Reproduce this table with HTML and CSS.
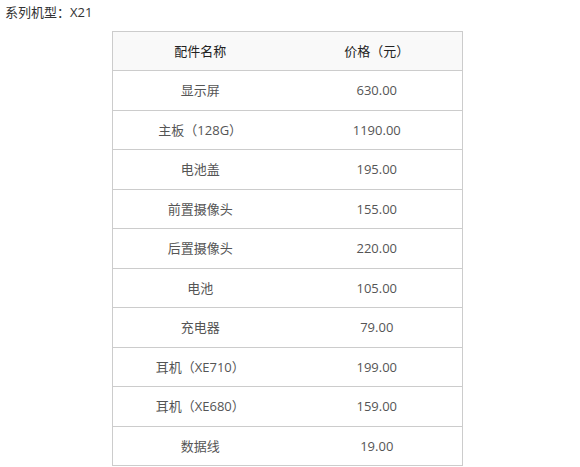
FILE: index.html
```html
<!DOCTYPE html>
<html lang="zh-CN">
<head>
<meta charset="utf-8">
<title>X21 配件价格</title>
<link rel="stylesheet" href="styles.css">
</head>
<body>
<p class="title">系列机型：X21</p>
<table class="price-table">
  <thead>
    <tr><th>配件名称</th><th>价格（元）</th></tr>
  </thead>
  <tbody>
    <tr><td>显示屏</td><td>630.00</td></tr>
    <tr><td>主板（128G）</td><td>1190.00</td></tr>
    <tr><td>电池盖</td><td>195.00</td></tr>
    <tr><td>前置摄像头</td><td>155.00</td></tr>
    <tr><td>后置摄像头</td><td>220.00</td></tr>
    <tr><td>电池</td><td>105.00</td></tr>
    <tr><td>充电器</td><td>79.00</td></tr>
    <tr><td>耳机（XE710）</td><td>199.00</td></tr>
    <tr><td>耳机（XE680）</td><td>159.00</td></tr>
    <tr><td>数据线</td><td>19.00</td></tr>
  </tbody>
</table>
</body>
</html>
```
FILE: styles.css
```css
html, body {
  margin: 0;
  padding: 0;
  background: #fff;
}
body {
  font-family: "Open Sans", "Noto Sans CJK SC", sans-serif;
  font-size: 13px;
  color: #555;
}
.title {
  margin: 0;
  padding: 3px 0 0 5px;
  line-height: 18px;
  color: #333;
}
.price-table {
  margin: 10px 0 0 112px;
  width: 351px;
  border-collapse: collapse;
  table-layout: fixed;
  border: 1px solid #ccc;
}
.price-table th,
.price-table td {
  border-top: 1px solid #ccc;
  border-bottom: 1px solid #ccc;
  text-align: center;
  padding: 10px 0;
  line-height: 18.45px;
  font-weight: normal;
}
.price-table th {
  background: #f9f9f9;
  color: #222;
}
.price-table td:last-child,
.price-table th:last-child {
  padding-left: 4px;
}
```
